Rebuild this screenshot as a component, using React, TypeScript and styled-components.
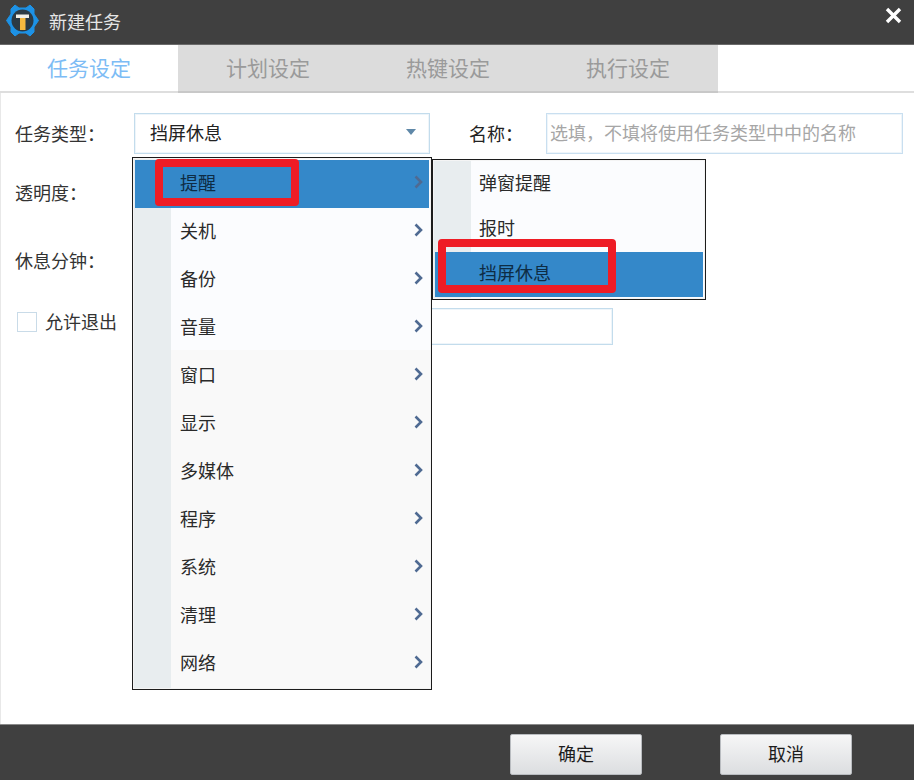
import React from 'react'
import styled, { createGlobalStyle } from 'styled-components'

const GlobalStyle = createGlobalStyle`
  html, body {
    margin: 0;
    padding: 0;
    background: #fff;
  }
  * {
    box-sizing: border-box;
  }
`

const FONT = '"Noto Sans CJK SC", "Liberation Sans", sans-serif'

const Dialog = styled.div`
  width: 914px;
  height: 780px;
  display: flex;
  flex-direction: column;
  background: #fff;
  font-family: ${FONT};
  font-size: 18px;
  color: #333;
  overflow: hidden;
`

const TitleBar = styled.div`
  height: 45px;
  flex: none;
  display: flex;
  align-items: center;
  padding: 0 12px 3px 6px;
  gap: 10px;
  background: #404040;
  border-bottom: 1px solid #6a6a6a;
  color: #e6e6e6;
`

const TitleText = styled.span`
  flex: 1;
  line-height: 24px;
`

const CloseButton = styled.svg`
  width: 17px;
  height: 17px;
  margin-top: -11px;
`

const TabBar = styled.div`
  height: 48px;
  flex: none;
  display: flex;
  border-bottom: 2px solid #dedede;
`

const TabGroup = styled.div`
  display: flex;
  background: #dcdcdc;
  margin-bottom: -2px;
  border-bottom: 2px solid #c8c8c8;
`

const Tab = styled.div<{ $active?: boolean }>`
  width: ${p => (p.$active ? '178px' : '180px')};
  display: flex;
  align-items: center;
  justify-content: center;
  padding-bottom: 3px;
  font-size: 21px;
  color: ${p => (p.$active ? '#7dbcf5' : '#9a9a9a')};
  background: ${p => (p.$active ? '#fff' : 'transparent')};
`

const Body = styled.div`
  flex: 1;
  position: relative;
  padding: 20px 10px 0 14px;
  display: flex;
  flex-direction: column;
  border-left: 1px solid #e8e8e8;
`

const TopRow = styled.div`
  display: flex;
  align-items: center;
  height: 41px;
`

const Label = styled.div<{ $width?: number }>`
  width: ${p => p.$width ?? 119}px;
  flex: none;
  padding-bottom: 2px;
  line-height: 24px;
`

const Select = styled.div`
  width: 296px;
  height: 41px;
  flex: none;
  display: flex;
  align-items: center;
  justify-content: space-between;
  padding: 0 13px 3px 15px;
  border: 1px solid #c3dcec;
  box-shadow: inset 0 0 0 1px #eef5fa;
  color: #222;
`

const Caret = styled.span`
  width: 0;
  height: 0;
  border-left: 5px solid transparent;
  border-right: 5px solid transparent;
  border-top: 6px solid #5f88a8;
`

const NameLabel = styled(Label)`
  margin-left: 39px;
  color: #222;
`

const NameInput = styled.div`
  width: 357px;
  height: 41px;
  display: flex;
  align-items: center;
  padding: 0 3px 3px;
  border: 1px solid #c9dff0;
  box-shadow: inset 0 0 0 1px #eef5fa;
  color: #a6a6a6;
  white-space: nowrap;
`

const FieldRow = styled.div<{ $height: number }>`
  height: ${p => p.$height}px;
  display: flex;
  align-items: center;
`

const CheckRow = styled.div`
  height: 37px;
  margin-top: 18px;
  display: flex;
  align-items: flex-start;
`

const CheckBox = styled.span`
  width: 20px;
  height: 20px;
  flex: none;
  margin: 4px 0 0 2px;
  border: 1px solid #c9dbe8;
`

const CheckLabel = styled.span`
  width: 376px;
  flex: none;
  margin-left: 8px;
  line-height: 26px;
`

const BlankInput = styled.div`
  width: 192px;
  height: 37px;
  flex: none;
  border: 1px solid #c3dcec;
  box-shadow: inset 0 0 0 1px #eef5fa;
`

const Menu = styled.div<{ $sub?: boolean }>`
  position: absolute;
  left: ${p => (p.$sub ? '431px' : '131px')};
  top: ${p => (p.$sub ? '66px' : '64px')};
  width: ${p => (p.$sub ? '274px' : '300px')};
  padding: ${p => (p.$sub ? '2px' : '2px 2px 0')};
  height: ${p => (p.$sub ? '141px' : '533px')};
  background:
    linear-gradient(90deg, #e8edef 38px, transparent 38px),
    linear-gradient(#fbfcfe 192px, #f9f9f9 192px);
  border: 1px solid #1c1c1c;
  box-shadow: inset 0 0 0 1px #f4f4f4;
`

const MenuItem = styled.div<{ $selected?: boolean; $sub?: boolean }>`
  height: ${p => (p.$sub ? '45px' : '48px')};
  display: flex;
  align-items: center;
  justify-content: space-between;
  padding: 0 6px ${p => (p.$sub ? '6px' : '4px')} ${p => (p.$sub ? '44px' : '45px')};
  background: ${p => (p.$selected ? '#3488c9' : 'transparent')};
  color: ${p => (p.$selected ? '#0e2c44' : '#2a2a2a')};
`

const Chevron = styled.svg`
  width: 9px;
  height: 14px;
`

const RedMark = styled.div<{ $sub?: boolean }>`
  position: absolute;
  left: ${p => (p.$sub ? '5px' : '22px')};
  top: ${p => (p.$sub ? '79px' : '1px')};
  width: ${p => (p.$sub ? '178px' : '144px')};
  height: ${p => (p.$sub ? '54px' : '47px')};
  border: 8px solid #ee1c25;
  border-radius: 4px;
`

const Footer = styled.div`
  height: 56px;
  flex: none;
  display: flex;
  justify-content: flex-end;
  align-items: flex-start;
  gap: 78px;
  padding: 9px 62px 0 0;
  background: #404040;
  border-top: 1px solid #8a8a8a;
`

const FooterButton = styled.div`
  width: 132px;
  height: 41px;
  display: flex;
  align-items: center;
  justify-content: center;
  padding-bottom: 4px;
  background: linear-gradient(#f6f6f7, #dcdee0);
  border: 1px solid #b9bcc0;
  border-radius: 2px;
  color: #1c1c1c;
`

const Logo = () => (
  <svg width="33" height="33" viewBox="0 0 33 33">
    <path
      d="M9 1 L13 4 H20 L24 1 L28 5 V10 L32.5 16.5 L28 23 V28 L24 32 L20 29 H13 L9 32 L5 28 V23 L0.5 16.5 L5 10 V5 Z"
      fill="#1d92e6"
      stroke="#1d92e6"
      strokeLinejoin="round"
    />
    <circle cx="16.5" cy="16.5" r="11" fill="#2c3a44" />
    <path d="M14 13 H19.5 V26 H14 Z" fill="#f5b93f" />
    <path d="M10 10.5 H23 V14 H10 Z" fill="#f2f0e8" />
  </svg>
)

const ChevronIcon = () => (
  <Chevron viewBox="0 0 9 14">
    <path d="M1.5 1.5 L7 7 L1.5 12.5" fill="none" stroke="#4f6a92" strokeWidth="2.6" />
  </Chevron>
)

const MENU_ITEMS = ['提醒', '关机', '备份', '音量', '窗口', '显示', '多媒体', '程序', '系统', '清理', '网络']
const SUB_ITEMS = ['弹窗提醒', '报时', '挡屏休息']

export default function App() {
  return (
    <>
      <GlobalStyle />
      <Dialog>
        <TitleBar>
          <Logo />
          <TitleText>新建任务</TitleText>
          <CloseButton viewBox="0 0 17 17">
            <path d="M2 2 L15 15 M15 2 L2 15" stroke="#fff" strokeWidth="3.4" />
          </CloseButton>
        </TitleBar>
        <TabBar>
          <Tab $active>任务设定</Tab>
          <TabGroup>
            <Tab>计划设定</Tab>
            <Tab>热键设定</Tab>
            <Tab>执行设定</Tab>
          </TabGroup>
        </TabBar>
        <Body>
          <TopRow>
            <Label>任务类型：</Label>
            <Select>
              挡屏休息
              <Caret />
            </Select>
            <NameLabel $width={77}>名称：</NameLabel>
            <NameInput>选填，不填将使用任务类型中中的名称</NameInput>
          </TopRow>
          <FieldRow $height={78}>
            <Label>透明度：</Label>
          </FieldRow>
          <FieldRow $height={58}>
            <Label>休息分钟：</Label>
          </FieldRow>
          <CheckRow>
            <CheckBox />
            <CheckLabel>允许退出</CheckLabel>
            <BlankInput />
          </CheckRow>
          <Menu>
            {MENU_ITEMS.map((item, i) => (
              <MenuItem key={item} $selected={i === 0}>
                {item}
                <ChevronIcon />
              </MenuItem>
            ))}
            <RedMark />
          </Menu>
          <Menu $sub>
            {SUB_ITEMS.map((item, i) => (
              <MenuItem key={item} $sub $selected={i === 2}>
                {item}
              </MenuItem>
            ))}
            <RedMark $sub />
          </Menu>
        </Body>
        <Footer>
          <FooterButton>确定</FooterButton>
          <FooterButton>取消</FooterButton>
        </Footer>
      </Dialog>
    </>
  )
}
